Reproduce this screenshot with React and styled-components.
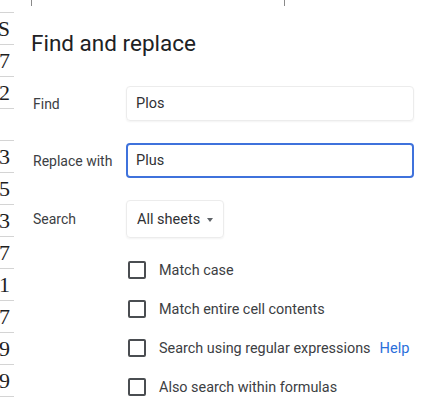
import React from 'react';
import styled, { createGlobalStyle } from 'styled-components';

const GlobalStyle = createGlobalStyle`
	html, body {
		margin: 0;
		padding: 0;
		background: #ffffff;
	}
	body {
		font-family: Roboto, "Liberation Sans", Arial, sans-serif;
		-webkit-font-smoothing: antialiased;
	}
	* {
		box-sizing: border-box;
	}
`;

const sheetValues = ['S', '7', '2', '', '3', '5', '3', '7', '1', '7', '9', '9'];

const options = [
	{ label: 'Match case' },
	{ label: 'Match entire cell contents' },
	{ label: 'Search using regular expressions', help: true },
	{ label: 'Also search within formulas' },
];

const App = () => {
	return (
		<>
			<GlobalStyle />
			<Page>
				<TopStrip>
					<HeaderCol />
					<HeaderCol />
				</TopStrip>
				<Body>
					<SheetEdge>
						<SheetCell $partial />
						{sheetValues.map((value, index) => (
							<SheetCell key={index}>{value}</SheetCell>
						))}
					</SheetEdge>
					<Dialog>
						<Title>Find and replace</Title>
						<Form>
							<Label>Find</Label>
							<TextBox>Plos</TextBox>
							<Label>Replace with</Label>
							<TextBox $focused>Plus</TextBox>
							<Label>Search</Label>
							<div>
								<Dropdown>
									All sheets
									<Caret />
								</Dropdown>
							</div>
						</Form>
						<Options>
							{options.map(option => (
								<Option key={option.label}>
									<Checkbox />
									<OptionText>{option.label}</OptionText>
									{option.help && <HelpLink>Help</HelpLink>}
								</Option>
							))}
						</Options>
					</Dialog>
				</Body>
			</Page>
		</>
	);
};

const Page = styled.div`
	display: flex;
	flex-direction: column;
	width: 424px;
	height: 399px;
	overflow: hidden;
	background: #ffffff;
`;

const TopStrip = styled.div`
	display: grid;
	grid-template-columns: 32px 253px;
	height: 9px;
	flex-shrink: 0;
`;

const HeaderCol = styled.div`
	height: 6px;
	border-right: 1px solid #8a8a8a;
`;

const Body = styled.div`
	display: flex;
	flex: 1;
	min-height: 0;
`;

const SheetEdge = styled.div`
	display: flex;
	flex-direction: column;
	width: 14px;
	flex-shrink: 0;
	overflow: hidden;
`;

const SheetCell = styled.div`
	display: flex;
	justify-content: flex-end;
	align-items: center;
	height: ${props => (props.$partial ? '4px' : '32px')};
	flex-shrink: 0;
	padding-right: 4px;
	border-bottom: 1px solid #d4d4d4;
	font-family: "Liberation Serif", "DejaVu Serif", serif;
	font-size: 22px;
	color: #1f1f1f;
	white-space: nowrap;
`;

const Dialog = styled.div`
	display: flex;
	flex-direction: column;
	flex: 1;
	padding: 20px 10px 0 17px;
	background: #ffffff;
`;

const Title = styled.h1`
	margin: 0;
	font-size: 22.5px;
	line-height: 28px;
	font-weight: 400;
	color: #202124;
`;

const Form = styled.div`
	display: grid;
	grid-template-columns: 95px 1fr;
	grid-template-rows: 35px 35px 38px;
	row-gap: 22px;
	align-items: center;
	margin-top: 29px;
`;

const Label = styled.div`
	padding-left: 2px;
	font-size: 14px;
	color: #3c4043;
`;

const TextBox = styled.div`
	display: flex;
	align-items: center;
	height: 35px;
	padding-left: ${props => (props.$focused ? '8px' : '9px')};
	border: ${props => (props.$focused ? '2px solid #3f72dc' : '1px solid #ececec')};
	border-radius: 4px;
	box-shadow: ${props => (props.$focused ? 'none' : '0 1px 2px rgba(0, 0, 0, 0.05)')};
	font-size: 14.5px;
	color: #303134;
`;

const Dropdown = styled.div`
	display: inline-flex;
	align-items: center;
	gap: 7px;
	height: 38px;
	padding: 0 10px 0 10px;
	border: 1px solid #ececec;
	border-radius: 4px;
	box-shadow: 0 1px 2px rgba(0, 0, 0, 0.05);
	font-size: 14.5px;
	color: #303134;
`;

const Caret = styled.span`
	width: 0;
	height: 0;
	border-left: 3.5px solid transparent;
	border-right: 3.5px solid transparent;
	border-top: 4px solid #5f6368;
	margin-top: 1px;
`;

const Options = styled.div`
	display: flex;
	flex-direction: column;
	gap: 21px;
	margin-top: 23px;
	padding-left: 97px;
`;

const Option = styled.div`
	display: flex;
	align-items: center;
	height: 18px;
`;

const Checkbox = styled.span`
	width: 18px;
	height: 18px;
	flex-shrink: 0;
	border: 2px solid #4a4d51;
	border-radius: 2px;
`;

const OptionText = styled.span`
	margin-left: 13px;
	font-size: 14.4px;
	color: #3c4043;
	white-space: nowrap;
`;

const HelpLink = styled.span`
	margin-left: 9px;
	font-size: 14.6px;
	color: #2a6fdb;
`;

export default App;
